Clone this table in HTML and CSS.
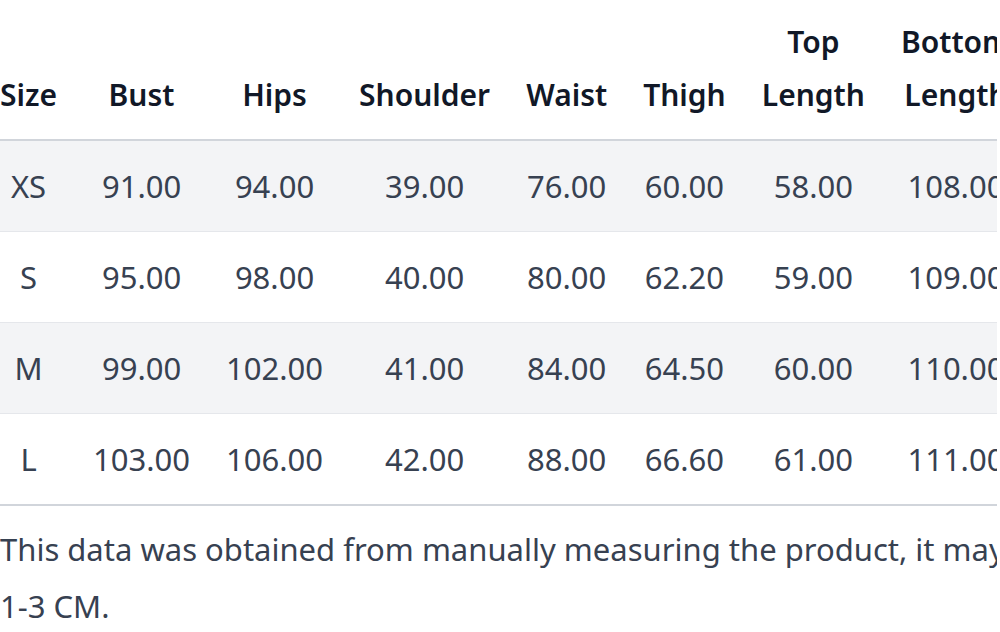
FILE: index.html
```html
<!DOCTYPE html>
<html lang="en">
<head>
<meta charset="utf-8">
<title>Size chart</title>
<link rel="stylesheet" href="styles.css">
</head>
<body>
<div class="page">
  <div class="table-wrap">
    <table class="size-table">
      <thead>
        <tr>
          <th>Size</th>
          <th>Bust</th>
          <th>Hips</th>
          <th>Shoulder</th>
          <th>Waist</th>
          <th>Thigh</th>
          <th>Top Length</th>
          <th>Bottom Length</th>
        </tr>
      </thead>
      <tbody>
        <tr><td>XS</td><td>91.00</td><td>94.00</td><td>39.00</td><td>76.00</td><td>60.00</td><td>58.00</td><td>108.00</td></tr>
        <tr><td>S</td><td>95.00</td><td>98.00</td><td>40.00</td><td>80.00</td><td>62.20</td><td>59.00</td><td>109.00</td></tr>
        <tr><td>M</td><td>99.00</td><td>102.00</td><td>41.00</td><td>84.00</td><td>64.50</td><td>60.00</td><td>110.00</td></tr>
        <tr><td>L</td><td>103.00</td><td>106.00</td><td>42.00</td><td>88.00</td><td>66.60</td><td>61.00</td><td>111.00</td></tr>
      </tbody>
    </table>
  </div>
  <p class="note">This data was obtained from manually measuring the product, it may be off by 1-3 CM.</p>
</div>
</body>
</html>
```

FILE: styles.css
```css
html, body {
  margin: 0;
  padding: 0;
  background: #ffffff;
}

body {
  font-family: "Noto Sans", "Open Sans", sans-serif;
  color: #374151;
}

.page {
  width: 997px;
  height: 632px;
  overflow: hidden;
  padding-top: 15px;
  box-sizing: border-box;
}

.table-wrap {
  width: 100%;
}

.size-table {
  width: 100%;
  border-collapse: collapse;
  font-size: 31px;
  line-height: 53px;
}

.size-table th {
  font-size: 30px;
  font-weight: 600;
  color: #111827;
  vertical-align: bottom;
  text-align: center;
  padding: 0 18px 18px 18px;
  border-bottom: 2px solid #d1d5db;
}

.size-table td {
  text-align: center;
  padding: 18.5px 18px;
  white-space: nowrap;
}

.size-table th:first-child,
.size-table td:first-child {
  padding-left: 0;
}

.size-table tbody tr {
  border-bottom: 1px solid #e5e7eb;
}

.size-table tbody tr:nth-child(odd) {
  background: #f3f4f6;
}

.size-table tbody tr:last-child {
  border-bottom: 2px solid #d1d5db;
}

.note {
  width: 1150px;
  margin: 15px 0 0 0;
  font-size: 31px;
  line-height: 56.5px;
  color: #374151;
}
```
